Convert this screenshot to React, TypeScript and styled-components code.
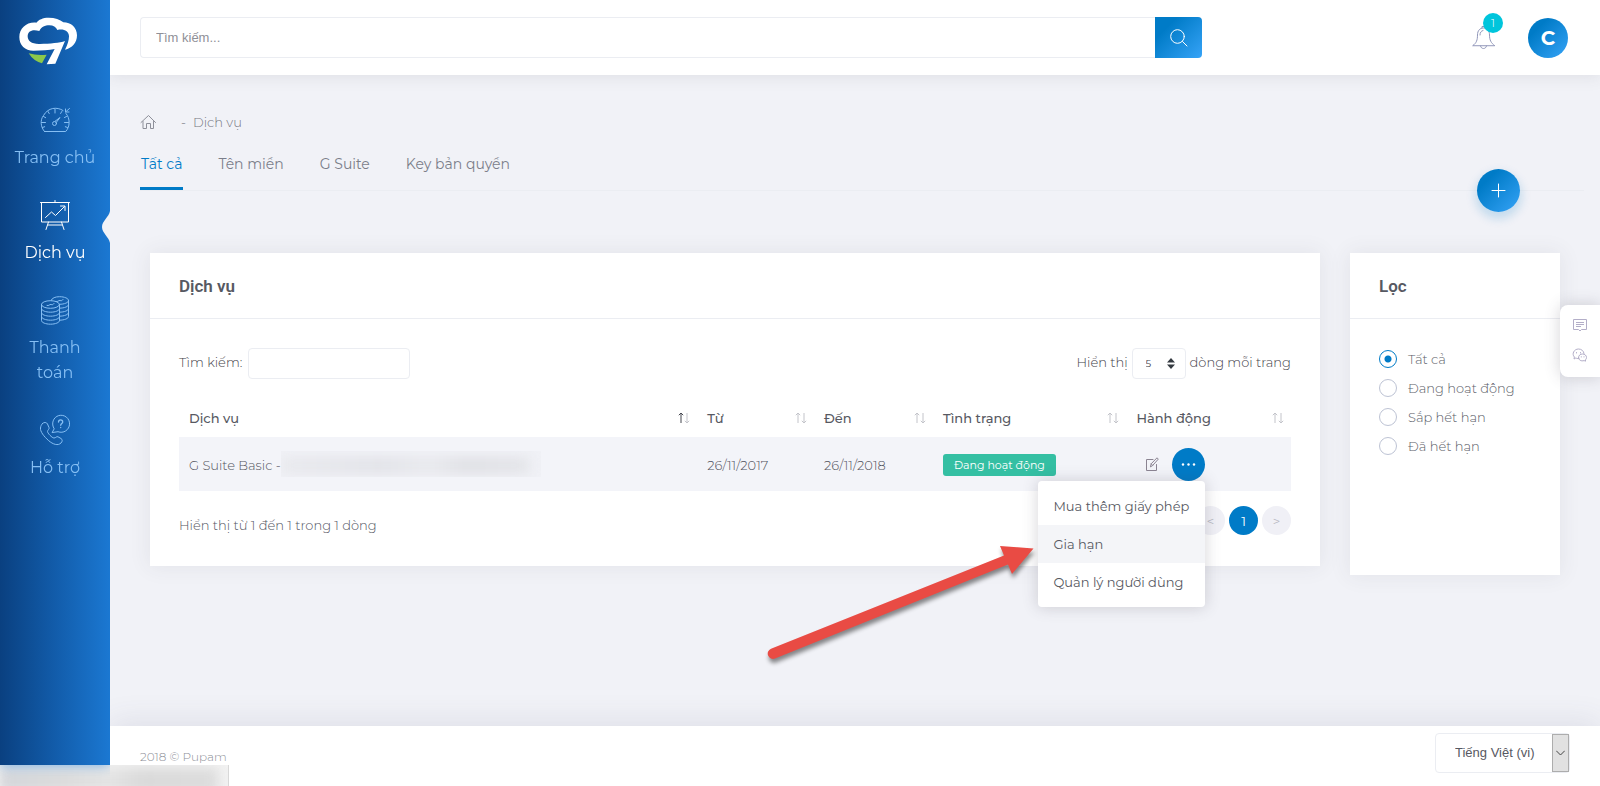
import React from 'react';
import styled, { createGlobalStyle, css } from 'styled-components';

const primary = '#007bc7';
const gradient = 'linear-gradient(135deg, #007bc7 25%, #36a3f7 100%)';
const shadow = '0 0 20px 1px rgba(69, 65, 78, 0.08)';

const GlobalStyle = createGlobalStyle`
  *, *::before, *::after { box-sizing: border-box; }
  body {
    margin: 0;
    background: #f1f2f7;
    color: #53555f;
    font-family: Montserrat, Inter, sans-serif;
    font-size: 13px;
    font-weight: 300;
    line-height: 20px;
  }
  button, input, select { font: inherit; color: inherit; margin: 0; }
  button { border: 0; padding: 0; background: none; cursor: pointer; }
  a { color: inherit; text-decoration: none; }
`;

const Page = styled.div`
  display: flex;
  min-height: 100vh;
`;

const Sidebar = styled.aside`
  position: sticky;
  top: 0;
  z-index: 5;
  flex: 0 0 110px;
  height: calc(100vh - 21px);
  background: linear-gradient(90deg, #0a4080 0%, #125caa 50%, #1b78d2 100%);
  box-shadow: 0 0 12px rgba(27, 120, 210, 0.6);
  clip-path: inset(0 0 -20px 0);
`;

const Logo = styled.a`
  display: block;
  height: 87px;
  padding: 17px 0 0 19px;
`;

const NavItem = styled.a<{ $active?: boolean }>`
  position: relative;
  display: flex;
  flex-direction: column;
  align-items: center;
  gap: 9px;
  padding: 17px 12px 12px;
  color: ${(p) => (p.$active ? '#ffffff' : '#86bff4')};
  font-size: 16px;
  font-weight: 400;
  line-height: 25px;
  text-align: center;
`;

const Pointer = styled.svg`
  position: absolute;
  right: 0;
  top: 29px;
`;

const Body = styled.div`
  flex: 1;
  min-width: 0;
  display: flex;
  flex-direction: column;
`;

const Header = styled.header`
  display: flex;
  align-items: center;
  height: 75px;
  padding: 0 32px 0 30px;
  background: #fff;
  box-shadow: 0 1px 15px 1px rgba(69, 65, 78, 0.1);
`;

const SearchForm = styled.form`
  display: flex;
  width: 74.4%;
  height: 41px;
`;

const SearchInput = styled.input`
  flex: 1;
  min-width: 0;
  padding: 0 15px;
  border: 1px solid #ebedf2;
  border-right: 0;
  border-radius: 4px 0 0 4px;
  font-family: 'Liberation Sans', sans-serif;
  font-size: 13px;
  font-weight: 400;
  outline: 0;
  &::placeholder { color: #8f9097; opacity: 1; }
`;

const SearchButton = styled.button`
  display: grid;
  place-items: center;
  width: 47px;
  border-radius: 0 4px 4px 0;
  background: ${gradient};
`;

const UserTools = styled.div`
  display: flex;
  align-items: center;
  gap: 32px;
  margin-left: auto;
`;

const BellButton = styled.button`
  position: relative;
  width: 24px;
  height: 26px;
`;

const Count = styled.span`
  position: absolute;
  left: 11px;
  top: -12px;
  width: 20px;
  height: 20px;
  border-radius: 50%;
  background: #00c5dc;
  color: #fff;
  font-size: 11px;
  line-height: 20px;
  text-align: center;
`;

const Avatar = styled.button`
  width: 40px;
  height: 40px;
  border-radius: 50%;
  background: ${gradient};
  color: #fff;
  font-size: 20px;
  font-weight: 700;
`;

const Main = styled.main`
  flex: 1;
  padding: 37px 16px 40px 30px;
`;

const Breadcrumb = styled.nav`
  display: flex;
  align-items: center;
  gap: 25px;
  height: 20px;
  color: #767882;
`;

const HomeLink = styled.a`
  display: flex;
  color: #8d8f99;
`;

const Crumb = styled.span`
  display: flex;
  gap: 7px;
`;

const Tabs = styled.div`
  position: relative;
  display: flex;
  gap: 34px;
  margin-top: 21px;
  border-bottom: 1px solid #ebedf2;
`;

const Tab = styled.button<{ $active?: boolean }>`
  padding: 1px 1px 12px;
  border-bottom: 3px solid ${(p) => (p.$active ? primary : 'transparent')};
  color: ${(p) => (p.$active ? primary : '#7b7e8a')};
  font-size: 14px;
  font-weight: 400;
  line-height: 21px;
`;

const AddButton = styled.button`
  position: absolute;
  right: 64px;
  bottom: -22px;
  display: grid;
  place-items: center;
  width: 43px;
  height: 43px;
  border-radius: 50%;
  background: ${gradient};
  box-shadow: 0 5px 10px 2px rgba(0, 123, 199, 0.19);
`;

const Columns = styled.div`
  display: flex;
  align-items: flex-start;
  gap: 30px;
  margin: 62px 24px 0 10px;
`;

const Card = styled.section<{ $side?: boolean }>`
  background: #fff;
  box-shadow: ${shadow};
  ${(p) =>
    p.$side
      ? css`
          flex: 0 0 210px;
          min-height: 322px;
        `
      : css`
          flex: 1;
          min-width: 0;
        `}
`;

const CardTitle = styled.h2`
  margin: 0;
  padding: 1px 29px 0;
  border-bottom: 1px solid #ebedf2;
  color: #575962;
  font-family: Roboto, sans-serif;
  font-size: 17px;
  font-weight: 600;
  line-height: 64px;
`;

const CardBody = styled.div`
  padding: 29px 29px 31px;
`;

const Controls = styled.div`
  display: flex;
  justify-content: space-between;
  align-items: center;
`;

const FieldLabel = styled.label<{ $gap: number }>`
  display: flex;
  align-items: center;
  gap: ${(p) => p.$gap}px;
  color: #3f4149;
  line-height: 29px;
`;

const FieldText = styled.span`
  padding-bottom: 2px;
`;

const FilterInput = styled.input`
  width: 162px;
  height: 31px;
  padding: 0 10px;
  border: 1px solid #ebedf2;
  border-radius: 4px;
`;

const SelectWrap = styled.span`
  position: relative;
  display: flex;
`;

const LengthSelect = styled.select`
  appearance: none;
  width: 54px;
  height: 31px;
  padding: 0 13px;
  border: 1px solid #ebedf2;
  border-radius: 4px;
  background: #fff;
  font-size: 10px;
  font-weight: 400;
`;

const SelectMark = styled.svg`
  position: absolute;
  right: 11px;
  top: 10px;
  pointer-events: none;
`;

const Table = styled.table`
  width: 100%;
  margin-top: 19px;
  border-collapse: collapse;
  table-layout: fixed;
`;

const Th = styled.th<{ $w: string }>`
  width: ${(p) => p.$w};
  height: 39px;
  padding: 0 7px 0 10px;
  color: #575962;
  font-size: 13px;
  font-weight: 500;
  text-align: left;
`;

const ThInner = styled.span`
  display: flex;
  align-items: center;
  justify-content: space-between;
`;

const Td = styled.td<{ $text?: boolean }>`
  height: 54px;
  padding: ${(p) => (p.$text ? '2px 10px 0' : '0 10px')};
  background: #f3f4f9;
`;

const ServiceName = styled.span`
  display: flex;
  align-items: center;
`;

const Redacted = styled.span`
  position: relative;
  width: 260px;
  height: 26px;
  margin-bottom: 2px;
  overflow: hidden;
  background: #f0f1f6;
  &::after {
    content: '';
    position: absolute;
    inset: 7px 12px 4px 0;
    background: linear-gradient(90deg, #e8e9ed, #e1e2e7 40%, #e8e9ed 60%, #dedfe3 75%, #e3e4e8);
    filter: blur(6px);
  }
`;

const Status = styled.span`
  display: inline-block;
  padding: 0 11px;
  border-radius: 3px;
  background: #34bfa3;
  color: #fff;
  font-size: 11px;
  font-weight: 400;
  line-height: 22px;
  vertical-align: middle;
`;

const Actions = styled.div`
  position: relative;
  display: flex;
  align-items: center;
  gap: 5px;
  width: 69px;
`;

const EditButton = styled.button`
  display: grid;
  place-items: center;
  width: 31px;
  height: 33px;
`;

const MoreButton = styled.button`
  display: grid;
  place-items: center;
  width: 33px;
  height: 33px;
  border-radius: 50%;
  background: ${primary};
`;

const Menu = styled.div`
  position: absolute;
  right: 0;
  top: 100%;
  z-index: 2;
  width: 167px;
  padding: 6px 0;
  border-radius: 4px;
  background: #fff;
  box-shadow: 0 0 15px 1px rgba(69, 65, 78, 0.2);
`;

const MenuItem = styled.a<{ $active?: boolean }>`
  display: block;
  padding: 0 15px;
  background: ${(p) => (p.$active ? '#f4f5f8' : 'transparent')};
  color: #575962;
  font-weight: 400;
  line-height: 38px;
  white-space: nowrap;
`;

const ArrowMark = styled.svg`
  position: absolute;
  right: 100%;
  top: 50px;
  pointer-events: none;
  filter: drop-shadow(1px 4px 2px rgba(0, 0, 0, 0.45));
  overflow: visible;
`;

const TableFooter = styled.div`
  display: flex;
  justify-content: space-between;
  align-items: flex-end;
  margin-top: 15px;
`;

const Pager = styled.nav`
  display: flex;
  gap: 4px;
`;

const PageButton = styled.button<{ $active?: boolean }>`
  width: 29px;
  height: 29px;
  border-radius: 50%;
  background: ${(p) => (p.$active ? primary : '#f0f0f6')};
  color: ${(p) => (p.$active ? '#fff' : '#b3b4bd')};
  font-size: 13px;
  font-weight: 400;
`;

const FilterList = styled.fieldset`
  display: flex;
  flex-direction: column;
  gap: 9px;
  margin: 0;
  padding: 30px 29px;
  border: 0;
`;

const RadioLabel = styled.label`
  display: flex;
  align-items: center;
  gap: 11px;
  color: #5c5e69;
  white-space: nowrap;
`;

const Radio = styled.input`
  appearance: none;
  width: 18px;
  height: 18px;
  border: 1px solid #bdc3d4;
  border-radius: 50%;
  &:checked {
    border-color: ${primary};
    background: radial-gradient(circle, ${primary} 3px, transparent 4px);
  }
`;

const Footer = styled.footer`
  display: flex;
  justify-content: space-between;
  height: 60px;
  padding: 7px 30px 0;
  background: #fff;
  box-shadow: 0 -5px 30px 0 rgba(69, 65, 110, 0.1);
  color: #8e9098;
  font-size: 12px;
`;

const Copyright = styled.span`
  line-height: 47px;
`;

const LanguageWrap = styled.div`
  position: relative;
  width: 135px;
  height: 40px;
`;

const LanguageSelect = styled.select`
  appearance: none;
  width: 100%;
  height: 100%;
  padding: 0 19px;
  border: 1px solid #ebedf2;
  border-radius: 4px;
  background: #fff;
  color: #575962;
  font-family: 'Liberation Sans', sans-serif;
  font-size: 13px;
  font-weight: 400;
`;

const LanguageArrow = styled.span`
  position: absolute;
  right: 1px;
  top: 1px;
  bottom: 1px;
  display: grid;
  place-items: center;
  width: 17px;
  border: 1px solid #adadad;
  background: #e1e1e1;
  pointer-events: none;
`;

const QuickBar = styled.div`
  position: fixed;
  right: 0;
  top: 305px;
  z-index: 4;
  display: flex;
  flex-direction: column;
  align-items: center;
  justify-content: center;
  gap: 14px;
  width: 40px;
  height: 72px;
  border-radius: 8px 0 0 8px;
  background: #fff;
  box-shadow: 0 0 15px 1px rgba(69, 65, 78, 0.2);
`;

const QuickButton = styled.button`
  display: block;
  height: 16px;
`;

const StatusBubble = styled.div`
  position: fixed;
  left: 0;
  bottom: 0;
  z-index: 4;
  width: 229px;
  height: 21px;
  overflow: hidden;
  border-right: 1px solid #d8d8d8;
  background: #f2f2f2;
  &::after {
    content: '';
    position: absolute;
    inset: 3px 10px -8px 0;
    background: linear-gradient(90deg, #d4d6da, #dcdcdc 30%, #e4e4e4 50%, #d9d9d9 65%, #dcdcdc);
    filter: blur(6px);
  }
`;

type IconProps = { children: React.ReactNode; w: number; h: number; stroke?: string };

const LineIcon = ({ children, w, h, stroke = 'currentColor' }: IconProps) => (
  <svg width={w} height={h} viewBox={`0 0 ${w} ${h}`} fill="none" stroke={stroke} strokeLinecap="round" strokeLinejoin="round" aria-hidden="true">
    {children}
  </svg>
);

const GaugeIcon = () => (
  <LineIcon w={32} h={32}>
    <path d="M5.500 27.500C1.500 23 1 16 4.500 11.500C9 3.500 18 2.500 24 6.500M27 9.500C31.500 14.500 31 23 26.700 27.500H5.500" />
    <path d="M16 5v4M9 7.500l1.200 2M4.500 12.500l2.200 1.200M2.500 18.500h4M3.500 23.500l2.200-.8M29.500 18.500h-4M28.500 23.500l-2.200-.8M22.800 7.500l-1.200 2M30.500 4.500l-4 3.500M26.500 5v3h3.500M27.500 12.500l-2 1" />
    <circle cx="15.500" cy="19.500" r="2" />
    <path d="M17.200 18.500L21 13.500L16 17.300" />
  </LineIcon>
);

const BoardIcon = () => (
  <LineIcon w={32} h={32}>
    <path d="M1.500 3.500h29M2.500 3.500v19.500h27V3.500M16 1.500v2M9.500 23L7 30.500M22.500 23L25 30.500M9 26h14" />
    <path d="M6.500 18.500l6-5.500 4 3.500 9-9M21.500 7h4.500v4.500" />
  </LineIcon>
);

const CoinsIcon = () => (
  <LineIcon w={32} h={32}>
    <ellipse cx="11.500" cy="10.500" rx="9" ry="3.800" />
    <path d="M2.500 10.500v4c0 2 4 3.700 9 3.700s9-1.700 9-3.700v-4M2.500 14.500v4c0 2 4 3.700 9 3.700s9-1.700 9-3.700v-4M2.500 18.500v4c0 2 4 3.700 9 3.700s9-1.700 9-3.700v-4M2.500 22.500v4c0 2 4 3.700 9 3.700s9-1.700 9-3.700v-4" />
    <path d="M12 6.500c1-2.600 4.500-3.800 8.500-3.800c5 0 9 1.700 9 3.800s-4 3.800-9 3.800M29.500 6.500v4c0 2-4 3.700-9 3.700M29.500 10.500v4c0 2-4 3.700-9 3.700M29.500 14.500v4c0 2-4 3.700-9 3.700M29.500 18.500v4c0 2-4 3.700-9 3.700" />
    <path d="M8 11.500c2 .8 2.500-1.500 4-1s2 .2 3-1M17 7.500c2 .8 2.500-1.500 4-1s2 .2 3-1" />
  </LineIcon>
);

const SupportIcon = () => (
  <LineIcon w={32} h={32}>
    <path d="M3.500 9.500c1.500-1.500 4-1.500 5 .5l1.500 3.500c.7 1.500-1.500 2.500-1.500 4s4.500 6.500 6.500 6.500s2.500-2 4-1.200l3 1.700c1.700 1 1.500 3 0 4.500c-3 3-8 1.500-12.500-2.500S1 17.500 1.500 14c.2-2 1-3.500 2-4.500Z" />
    <path d="M15 14.500A8.500 8.500 0 1 1 19 17.700L13.500 18.500Z" />
    <path d="M19.500 8c.2-3 4.200-2.600 4.200 0c0 1.500-2 1.500-2 3.300M21.700 13.300v.3" strokeWidth="1.300" />
  </LineIcon>
);

const SortIcon = ({ active }: { active?: boolean }) => (
  <svg width="12" height="12" viewBox="0 0 12 12" fill="none" aria-hidden="true">
    <path d="M3 11V1M.8 3.200L3 1l2.200 2.200" stroke={active ? '#44464f' : '#c3c4ca'} />
    <path d="M9 1v10M6.800 8.800L9 11l2.200-2.200" stroke="#c3c4ca" />
  </svg>
);

const navItems = [
  { label: 'Trang chủ', icon: <GaugeIcon /> },
  { label: 'Dịch vụ', icon: <BoardIcon />, active: true },
  { label: 'Thanh toán', icon: <CoinsIcon /> },
  { label: 'Hỗ trợ', icon: <SupportIcon /> },
];

const columns = [
  { label: 'Dịch vụ', width: '46.6%', active: true },
  { label: 'Từ', width: '10.5%' },
  { label: 'Đến', width: '10.7%' },
  { label: 'Tình trạng', width: '17.4%' },
  { label: 'Hành động', width: '14.8%' },
];

const filters = ['Tất cả', 'Đang hoạt động', 'Sắp hết hạn', 'Đã hết hạn'];
const tabs = ['Tất cả', 'Tên miền', 'G Suite', 'Key bản quyền'];

export default function App() {
  return (
    <>
      <GlobalStyle />
      <Page>
        <Sidebar>
          <Logo href="#" aria-label="Pupam">
            <svg width="59" height="48" viewBox="57 50 177 144" aria-hidden="true">
              <path fill="#fff" d="M195 148C216 144 231 128 231 105C231 82 213 66 190 66C180 57 165 52 146 52C128 52 116 58 109 67C80 64 58 84 58 110C58 135 75 151 100 151C125 151 148 149 164 146L140 192L166 190L195 122C180 128 150 130 120 131C95 132 83 122 83 108C83 93 96 86 118 92C124 80 135 75 148 75C160 75 168 80 172 89C190 84 207 92 207 108C207 120 203 133 195 148Z" />
              <path fill="#8cc84b" d="M86 159Q110 166 140 163L126 189Q100 182 86 159Z" />
            </svg>
          </Logo>
          <nav>
            {navItems.map((item) => (
              <NavItem key={item.label} href="#" $active={item.active}>
                {item.icon}
                {item.label}
                {item.active && (
                  <Pointer width="8" height="32" viewBox="0 0 8 32" aria-hidden="true">
                    <path fill="#f1f2f7" d="M8 0C7 6 0 10 0 16S7 26 8 32Z" />
                  </Pointer>
                )}
              </NavItem>
            ))}
          </nav>
        </Sidebar>

        <Body>
          <Header>
            <SearchForm>
              <SearchInput type="text" placeholder="Tìm kiếm..." aria-label="Tìm kiếm" />
              <SearchButton type="button" aria-label="Tìm kiếm">
                <LineIcon w={18} h={18} stroke="#fff">
                  <circle cx="7.500" cy="7.500" r="6.800" />
                  <path d="M12.500 12.500L17 17" />
                </LineIcon>
              </SearchButton>
            </SearchForm>
            <UserTools>
              <BellButton aria-label="Thông báo">
                <LineIcon w={24} h={26} stroke="#9298ba">
                  <path d="M1 20.500C4.500 18 5.500 15 5.500 10C5.500 5.500 8 3 11.500 3S17.500 5.500 17.500 10C17.500 15 19 18 22.500 20.500ZM10 3V1.500h3V3M8.500 21c.5 3.500 5.500 3.500 6 0M8 10c0-2.500 1-4 3-4.500" />
                </LineIcon>
                <Count>1</Count>
              </BellButton>
              <Avatar>C</Avatar>
            </UserTools>
          </Header>

          <Main>
            <Breadcrumb>
              <HomeLink href="#" aria-label="Trang chủ">
                <LineIcon w={16} h={16}>
                  <path d="M1 8.500L8.500 1.500L15.500 8.500M3 7.500V14.500H6.500V9.500H10.500V14.500H13.500V7.500" />
                </LineIcon>
              </HomeLink>
              <Crumb>
                <span>-</span>
                <a href="#">Dịch vụ</a>
              </Crumb>
            </Breadcrumb>
            <Tabs>
              {tabs.map((t, i) => (
                <Tab key={t} $active={i === 0}>{t}</Tab>
              ))}
              <AddButton aria-label="Thêm">
                <LineIcon w={15} h={15} stroke="#fff">
                  <path d="M7.500 1v13M1 7.500h13" />
                </LineIcon>
              </AddButton>
            </Tabs>

            <Columns>
              <Card>
                <CardTitle>Dịch vụ</CardTitle>
                <CardBody>
                  <Controls>
                    <FieldLabel $gap={6}>
                      <FieldText>Tìm kiếm:</FieldText>
                      <FilterInput type="search" />
                    </FieldLabel>
                    <FieldLabel $gap={4}>
                      <FieldText>Hiển thị</FieldText>
                      <SelectWrap>
                        <LengthSelect defaultValue="5">
                          <option>5</option>
                          <option>10</option>
                        </LengthSelect>
                        <SelectMark width="8" height="11" viewBox="0 0 8 11" fill="#343a40" aria-hidden="true">
                          <path d="M4 0L8 4.500H0ZM4 11L0 6.500H8Z" />
                        </SelectMark>
                      </SelectWrap>
                      <FieldText>dòng mỗi trang</FieldText>
                    </FieldLabel>
                  </Controls>
                  <Table>
                    <thead>
                      <tr>
                        {columns.map((c) => (
                          <Th key={c.label} $w={c.width}>
                            <ThInner>
                              {c.label}
                              <SortIcon active={c.active} />
                            </ThInner>
                          </Th>
                        ))}
                      </tr>
                    </thead>
                    <tbody>
                      <tr>
                        <Td $text>
                          <ServiceName>
                            G Suite Basic -
                            <Redacted />
                          </ServiceName>
                        </Td>
                        <Td $text>26/11/2017</Td>
                        <Td $text>26/11/2018</Td>
                        <Td $text>
                          <Status>Đang hoạt động</Status>
                        </Td>
                        <Td>
                          <Actions>
                            <EditButton aria-label="Sửa">
                              <LineIcon w={14} h={14} stroke="#8b8492">
                                <path d="M8 2.500H1.500v11h10V7.500M5.500 9.500l.7-2.700L12 .8l1.300 1.300-5.600 6.300ZM6.200 6.800l1.500 1.600" />
                              </LineIcon>
                            </EditButton>
                            <MoreButton aria-label="Thao tác khác">
                              <svg width="15" height="3" viewBox="0 0 15 3" fill="#fff" aria-hidden="true">
                                <circle cx="2" cy="1.500" r="1.200" />
                                <circle cx="7.500" cy="1.500" r="1.200" />
                                <circle cx="13" cy="1.500" r="1.200" />
                              </svg>
                            </MoreButton>
                            <Menu>
                              <MenuItem href="#">Mua thêm giấy phép</MenuItem>
                              <MenuItem href="#" $active>Gia hạn</MenuItem>
                              <MenuItem href="#">Quản lý người dùng</MenuItem>
                              <ArrowMark width="278" height="140" viewBox="759 531 278 140" aria-hidden="true">
                                <path fill="#e94b44" d="M1032.500 548.500L999 546L1003 555.500L770 648.700A5.200 5.200 0 0 0 774 658.500L1007 564.500L1011 574Z" />
                              </ArrowMark>
                            </Menu>
                          </Actions>
                        </Td>
                      </tr>
                    </tbody>
                  </Table>
                  <TableFooter>
                    <span>Hiển thị từ 1 đến 1 trong 1 dòng</span>
                    <Pager aria-label="Phân trang">
                      <PageButton aria-label="Trang trước">&lt;</PageButton>
                      <PageButton $active>1</PageButton>
                      <PageButton aria-label="Trang sau">&gt;</PageButton>
                    </Pager>
                  </TableFooter>
                </CardBody>
              </Card>

              <Card $side>
                <CardTitle>Lọc</CardTitle>
                <FilterList aria-label="Lọc">
                  {filters.map((f, i) => (
                    <RadioLabel key={f}>
                      <Radio type="radio" name="status" defaultChecked={i === 0} />
                      {f}
                    </RadioLabel>
                  ))}
                </FilterList>
              </Card>
            </Columns>
          </Main>

          <Footer>
            <Copyright>2018 © Pupam</Copyright>
            <LanguageWrap>
              <LanguageSelect aria-label="Ngôn ngữ" defaultValue="vi">
                <option value="vi">Tiếng Việt (vi)</option>
                <option value="en">English (en)</option>
              </LanguageSelect>
              <LanguageArrow>
                <LineIcon w={9} h={6} stroke="#444">
                  <path d="M.5 1l4 4 4-4" />
                </LineIcon>
              </LanguageArrow>
            </LanguageWrap>
          </Footer>
        </Body>
      </Page>

      <QuickBar>
        <QuickButton aria-label="Tin nhắn">
          <LineIcon w={16} h={16} stroke="#b3aec8">
            <path d="M1.500 1.500h13v10h-5L8 13l-1.500-1.500h-5ZM4 4.500h8M4 6.500h8M4 8.500h5" strokeLinecap="butt" />
          </LineIcon>
        </QuickButton>
        <QuickButton aria-label="Trò chuyện">
          <LineIcon w={16} h={16} stroke="#b3aec8">
            <path d="M7 10.500C5.500 10.800 4.500 10.300 3.800 10L2 11l.4-2C-.5 6 2 1 6.500 1c3 0 5.300 2 5.500 4.500" />
            <path d="M6.500 9.500c0-2 1.700-3.500 4-3.500s4 1.500 4 3.500c0 1-.4 1.800-1 2.300v1.400l-1.400-.6C9 13.500 6.500 12 6.500 9.500Z" />
            <path d="M4.500 4.500v.5M8.500 4.500v.5M9.300 8.700v.3M12 8.700v.3" />
          </LineIcon>
        </QuickButton>
      </QuickBar>
      <StatusBubble />
    </>
  );
}
